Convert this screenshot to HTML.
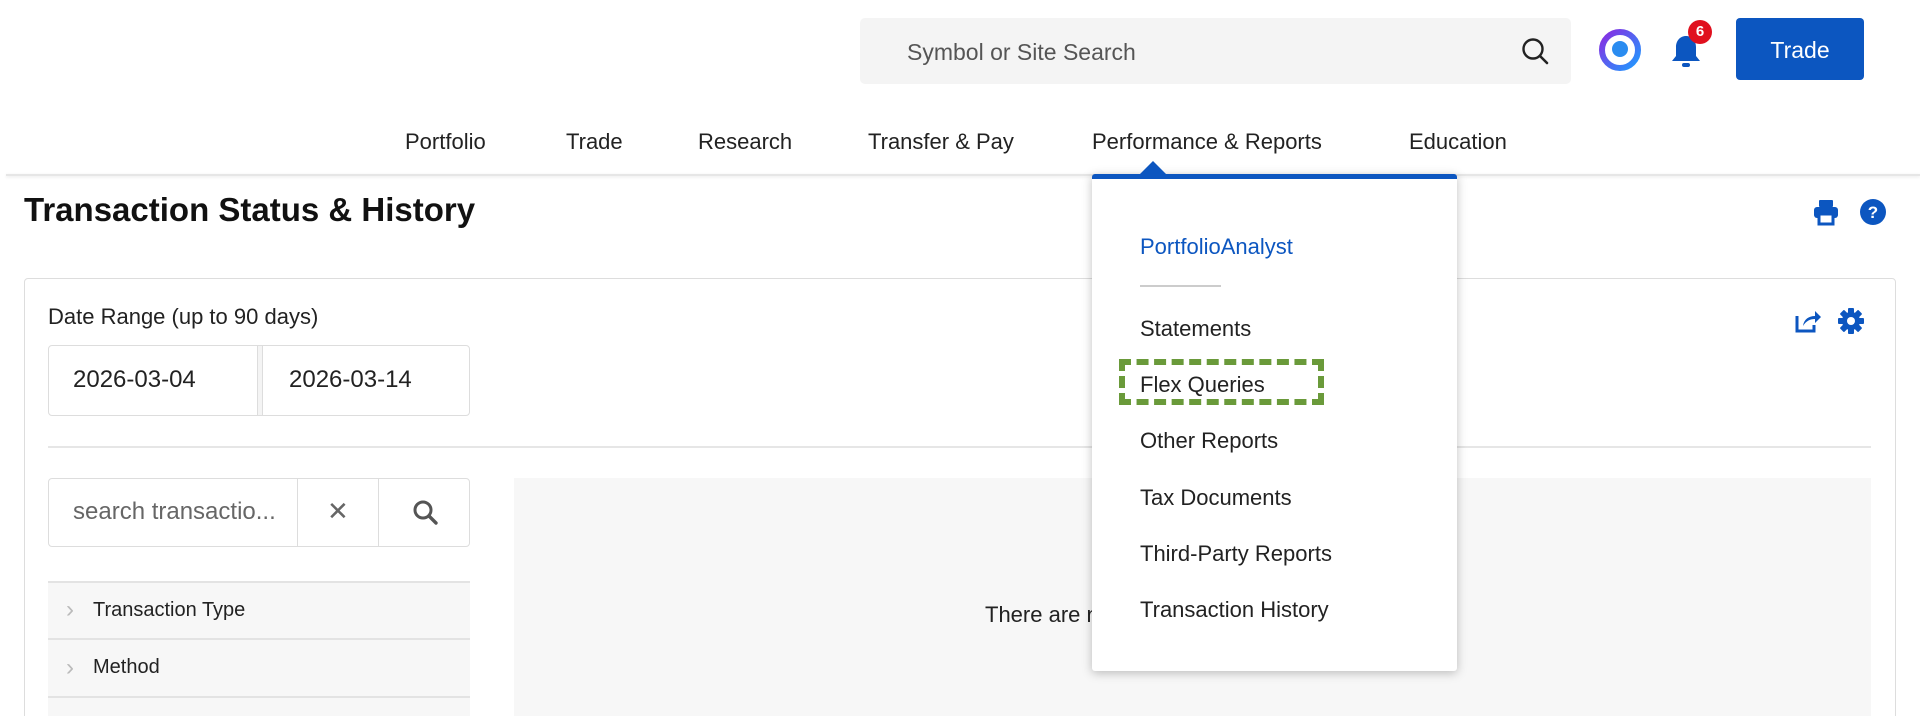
<!DOCTYPE html>
<html><head><meta charset="utf-8"><style>
*{box-sizing:border-box;margin:0;padding:0}
html,body{width:1920px;height:716px;overflow:hidden}
body{background:#fff;font-family:"Liberation Sans",sans-serif;color:#222;position:relative}
.a{position:absolute}
.nav{font-size:22px;color:#222;top:129px}
.dd{left:1092px;top:174px;width:365px;height:497px;background:#fff;border-top:5px solid #0c56c0;box-shadow:0 2px 10px rgba(0,0,0,.25);border-radius:3px;z-index:5}
.dd div{position:absolute;left:48px;font-size:22px;color:#222}
.box{border:1px solid #ddd;border-radius:4px;background:#fff}
</style></head><body>
<div class="a" style="left:860px;top:18px;width:711px;height:66px;background:#f4f4f4;border-radius:5px"></div>
<div class="a" style="left:907px;top:39px;font-size:23px;color:#555">Symbol or Site Search</div>
<svg class="a" style="left:1520px;top:36px" width="30" height="30" viewBox="0 0 30 30"><circle cx="13" cy="13" r="9.5" fill="none" stroke="#222" stroke-width="2.4"/><line x1="20" y1="20" x2="27" y2="27" stroke="#222" stroke-width="2.6" stroke-linecap="round"/></svg>
<svg class="a" style="left:1598px;top:28px" width="44" height="44" viewBox="0 0 44 44"><defs><linearGradient id="g" x1="0" y1="0" x2="1" y2="1"><stop offset="0" stop-color="#8a2be2"/><stop offset="1" stop-color="#1e9bff"/></linearGradient></defs><circle cx="22" cy="22" r="18" fill="none" stroke="url(#g)" stroke-width="6"/><circle cx="22" cy="21" r="8" fill="#2a8cf0"/></svg>
<svg class="a" style="left:1668px;top:32px" width="36" height="40" viewBox="0 0 36 40"><path d="M18 4c-6 0-10 5-10 11v9l-4 5h28l-4-5v-9c0-6-4-11-10-11z" fill="#0c56c0"/><rect x="14" y="31" width="8" height="4" rx="2" fill="#0c56c0"/></svg>
<div class="a" style="left:1688px;top:20px;width:24px;height:24px;border-radius:50%;background:#e0101e;color:#fff;font-size:15px;font-weight:bold;text-align:center;line-height:24px">6</div>
<div class="a" style="left:1736px;top:18px;width:128px;height:62px;background:#0c56c0;border-radius:4px;color:#fff;font-size:23px;text-align:center;line-height:64px">Trade</div>
<div class="a nav" style="left:405px">Portfolio</div>
<div class="a nav" style="left:566px">Trade</div>
<div class="a nav" style="left:698px">Research</div>
<div class="a nav" style="left:868px">Transfer &amp; Pay</div>
<div class="a nav" style="left:1092px">Performance &amp; Reports</div>
<div class="a nav" style="left:1409px">Education</div>
<div class="a" style="left:6px;top:174px;width:1914px;height:2px;background:#e6e6e6;box-shadow:0 1px 3px rgba(0,0,0,.1)"></div>
<div class="a" style="left:24px;top:191px;font-size:33px;font-weight:bold;color:#111">Transaction Status &amp; History</div>
<svg class="a" style="left:1812px;top:198px" width="28" height="28" viewBox="0 0 28 28"><rect x="7" y="2" width="14" height="7" rx="1" fill="#0c56c0"/><rect x="2" y="9" width="24" height="11" rx="3" fill="#0c56c0"/><rect x="7" y="16" width="14" height="10" fill="#fff" stroke="#0c56c0" stroke-width="3"/></svg>
<svg class="a" style="left:1859px;top:198px" width="28" height="28" viewBox="0 0 28 28"><circle cx="14" cy="14" r="13" fill="#0c56c0"/><text x="14" y="20" font-size="17" font-weight="bold" fill="#fff" text-anchor="middle" font-family="Liberation Sans">?</text></svg>
<div class="a box" style="left:24px;top:278px;width:1872px;height:460px"></div>
<div class="a" style="left:48px;top:304px;font-size:22px">Date Range (up to 90 days)</div>
<div class="a box" style="left:48px;top:345px;width:422px;height:71px"></div>
<div class="a" style="left:257px;top:346px;width:6px;height:69px;border-left:1px solid #ddd;border-right:1px solid #ddd;background:#f4f4f4"></div>
<div class="a" style="left:73px;top:366px;font-size:24px">2026-03-04</div>
<div class="a" style="left:289px;top:366px;font-size:24px">2026-03-14</div>
<svg class="a" style="left:1794px;top:308px" width="28" height="26" viewBox="0 0 28 26"><path d="M3 8v15h17v-6" fill="none" stroke="#0c56c0" stroke-width="3"/><path d="M9 18c1-7 6-10 12-10V3l6 6-6 6v-4c-5 0-9 2-12 7z" fill="#0c56c0"/></svg>
<svg class="a" style="left:1837px;top:307px" width="28" height="28" viewBox="0 0 28 28"><g fill="#0c56c0" transform="translate(14 14)"><circle r="9"/><rect x="-3" y="-13" width="6" height="26" rx="1"/><rect x="-3" y="-13" width="6" height="26" rx="1" transform="rotate(45)"/><rect x="-3" y="-13" width="6" height="26" rx="1" transform="rotate(90)"/><rect x="-3" y="-13" width="6" height="26" rx="1" transform="rotate(135)"/></g><circle cx="14" cy="14" r="4" fill="#fff"/></svg>
<div class="a" style="left:48px;top:446px;width:1823px;height:2px;background:#e6e6e6"></div>
<div class="a box" style="left:48px;top:478px;width:422px;height:69px"></div>
<div class="a" style="left:297px;top:478px;width:1px;height:69px;background:#ddd"></div>
<div class="a" style="left:378px;top:478px;width:1px;height:69px;background:#ddd"></div>
<div class="a" style="left:73px;top:498px;font-size:24px;color:#666;width:222px;overflow:hidden;white-space:nowrap">search transactio...</div>
<div class="a" style="left:327px;top:496px;font-size:26px;color:#666">✕</div>
<svg class="a" style="left:411px;top:498px" width="28" height="28" viewBox="0 0 28 28"><circle cx="12" cy="12" r="8" fill="none" stroke="#555" stroke-width="3"/><line x1="18" y1="18" x2="25" y2="25" stroke="#555" stroke-width="3.4" stroke-linecap="round"/></svg>
<div class="a" style="left:514px;top:478px;width:1357px;height:238px;background:#f7f7f7"></div>
<div class="a" style="left:985px;top:602px;font-size:22px;color:#222">There are no transactions to display</div>
<div class="a" style="left:48px;top:581px;width:422px;height:135px;background:#f7f7f7;border-top:2px solid #e3e3e3"></div>
<div class="a" style="left:48px;top:638px;width:422px;height:2px;background:#e3e3e3"></div>
<div class="a" style="left:48px;top:696px;width:422px;height:2px;background:#e3e3e3"></div>
<div class="a" style="left:66px;top:596px;font-size:24px;color:#bbb">›</div>
<div class="a" style="left:93px;top:599px;font-size:20px">Transaction Type</div>
<div class="a" style="left:66px;top:654px;font-size:24px;color:#bbb">›</div>
<div class="a" style="left:93px;top:656px;font-size:20px">Method</div>
<div class="a" style="left:1139px;top:161px;width:0;height:0;border-left:14px solid transparent;border-right:14px solid transparent;border-bottom:14px solid #0c56c0;z-index:6"></div>
<div class="a dd">
<div style="top:55px;color:#0c56c0">PortfolioAnalyst</div>
<div style="top:106px;width:81px;height:2px;background:#ccc"></div>
<div style="top:137px">Statements</div>
<div style="top:193px">Flex Queries</div>
<div style="top:249px">Other Reports</div>
<div style="top:306px">Tax Documents</div>
<div style="top:362px">Third-Party Reports</div>
<div style="top:418px">Transaction History</div>
<div style="left:27px;top:180px;width:205px;height:46px;border:6px dashed #6a9a3a"></div>
</div>
</body></html>
